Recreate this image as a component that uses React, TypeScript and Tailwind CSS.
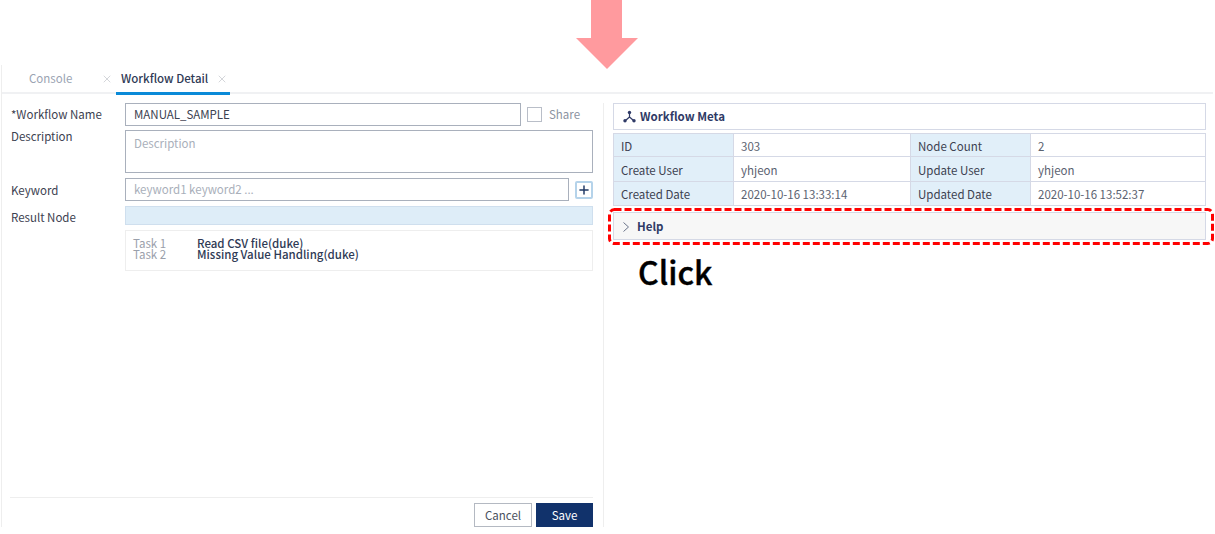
import { Plus, X } from "lucide-react";

const font = { fontFamily: '"Noto Sans CJK KR", "Noto Sans", sans-serif' };

const metaRows = [
  ["ID", "303", "Node Count", "2"],
  ["Create User", "yhjeon", "Update User", "yhjeon"],
  ["Created Date", "2020-10-16 13:33:14", "Updated Date", "2020-10-16 13:52:37"],
];

const App = () => {
  return (
    <div className="w-[1215px] h-[534px] overflow-hidden bg-white flex flex-col text-[11.5px] text-[#3c4150]" style={font}>
      {/* Pink arrow */}
      <div className="h-[65px] shrink-0 pl-[576px]">
        <svg width="62" height="69" viewBox="0 0 62 69" className="block">
          <polygon points="15,0 46,0 46,38 62,38 31,69 0,38 15,38" fill="#ff9a9e" />
        </svg>
      </div>

      <div className="flex-1 ml-[1px] border-l border-[#eeeeee] flex flex-col mb-[7px]">
        {/* Tabs */}
        <div className="h-[29px] shrink-0 flex items-stretch border-b-2 border-[#f0f1f3] mr-[2px]">
          <div className="w-[114px] flex items-center justify-between pl-[27px] pr-[3px] text-[#9aa3b2]">
            <span>Console</span>
            <X size={12} strokeWidth={1} className="text-[#a9adb5]" />
          </div>
          <div className="w-[114px] -mb-[3px] border-b-[3px] border-[#0a8ad8] flex items-center justify-between pl-[5px] pr-[2px] font-medium text-[#2f3a55]">
            <span>Workflow Detail</span>
            <X size={12} strokeWidth={1} className="text-[#a9adb5]" />
          </div>
        </div>

        {/* Body */}
        <div className="flex-1 flex pt-[9px]">
          {/* Left form */}
          <div className="w-[602px] shrink-0 border-r border-[#eeeeee] pl-[9px] pr-[10px] flex flex-col">
            <div className="flex items-center h-[23px]">
              <div className="w-[114px]">*Workflow Name</div>
              <div className="w-[396px] h-[23px] border border-[#a9b0bc] flex items-center px-[8px]">MANUAL_SAMPLE</div>
              <div className="ml-[6px] w-[15px] h-[15px] border border-[#b9bec8]"></div>
              <span className="ml-[7px] text-[#8b93a1]">Share</span>
            </div>
            <div className="flex h-[43px] mt-[4px]">
              <div className="w-[114px] leading-[12px]">Description</div>
              <div className="w-[468px] h-[43px] border border-[#a9b0bc] px-[8px] pt-[4px] text-[#a9afba]">Description</div>
            </div>
            <div className="flex items-center h-[23px] mt-[5px]">
              <div className="w-[114px] pt-[2px]">Keyword</div>
              <div className="w-[444px] h-[23px] border border-[#a9b0bc] flex items-center px-[8px] text-[#a9afba]">keyword1 keyword2 ...</div>
              <button className="ml-[6px] w-[18px] h-[18px] border-2 border-[#b5d3ea] rounded-[2px] flex items-center justify-center text-[#1f3864]">
                <Plus size={14} strokeWidth={2.5} />
              </button>
            </div>
            <div className="flex items-center h-[19px] mt-[5px]">
              <div className="w-[114px] pt-[5px]">Result Node</div>
              <div className="w-[468px] h-[19px] bg-[#deedf8] border border-[#cfdfee]"></div>
            </div>
            <div className="flex mt-[5px]">
              <div className="w-[114px]"></div>
              <div className="w-[468px] h-[41px] border border-[#eeeeee] pl-[7px] pt-[7px] leading-[11px]">
                <div className="flex">
                  <span className="w-[64px] text-[#9aa0ab]">Task 1</span>
                  <span className="font-medium text-[#2f3a55]">Read CSV file(duke)</span>
                </div>
                <div className="flex">
                  <span className="w-[64px] text-[#9aa0ab]">Task 2</span>
                  <span className="font-medium text-[#2f3a55]">Missing Value Handling(duke)</span>
                </div>
              </div>
            </div>

            {/* Footer */}
            <div className="mt-auto -ml-[1px] border-t border-[#eeeeee] pt-[5px] flex justify-end gap-[4px]">
              <button className="w-[58px] h-[24px] pt-[1px] border border-[#b4b9c2] text-[#4a5160] flex items-center justify-center">Cancel</button>
              <button className="w-[57px] h-[24px] pt-[1px] bg-[#11326b] text-white flex items-center justify-center">Save</button>
            </div>
          </div>

          {/* Right meta */}
          <div className="w-[593px] ml-[9px] shrink-0 flex flex-col">
            <div className="h-[27px] border border-[#d5d9e6] flex items-center pl-[9px] gap-[4px] font-bold text-[#2f3a66]">
              <svg width="13" height="13" viewBox="0 0 13 13" className="shrink-0">
                <path d="M6.5 3.5V7M6.5 7L2.5 10.5M6.5 7L10.5 10.5" stroke="#2f3a66" strokeWidth="1.2" fill="none" />
                <circle cx="6.5" cy="2.5" r="1.7" fill="#2f3a66" />
                <circle cx="2" cy="10.8" r="1.7" fill="#2f3a66" />
                <circle cx="11" cy="10.8" r="1.7" fill="#2f3a66" />
              </svg>
              <span>Workflow Meta</span>
            </div>

            <div className="mt-[3px] grid grid-cols-[120px_177px_120px_175px] grid-rows-[23px_25px_24px] border-l border-t border-[#d5d9e6]">
              {metaRows.flat().map((cell, i) => (
                <div
                  key={i}
                  className={
                    i % 2 === 0
                      ? "bg-[#e1eff9] border-r border-b border-[#d5d9e6] flex items-center pl-[7px] pt-[3px] text-[#3c4150]"
                      : "bg-white border-r border-b border-[#d5d9e6] flex items-center pl-[7px] pt-[3px] text-[#5b6270]"
                  }
                >
                  {cell}
                </div>
              ))}
            </div>

            {/* Help row with the red marker */}
            <div className="relative mt-[6px] h-[28px] pt-[1px] bg-[#f7f7f7] border border-[#d5d9e6] flex items-center pl-[8px] gap-[7px] font-bold text-[#2f3a66]">
              <svg width="8" height="10" viewBox="0 0 8 10" className="shrink-0">
                <polyline points="1.5,0.5 6.5,5 1.5,9.5" fill="none" stroke="#6a7389" strokeWidth="1" />
              </svg>
              <span>Help</span>
              <svg width="606" height="37" viewBox="0 0 606 37" className="absolute -left-[6px] -top-[5px] block">
                <rect x="1.5" y="1.5" width="603" height="34" rx="5" fill="none" stroke="#ff0000" strokeWidth="3" strokeDasharray="7 3" />
              </svg>
            </div>

            <div className="mt-[13px] pl-[25px] text-[32px] leading-[36px] font-medium text-black [-webkit-text-stroke:0.4px_black]">Click</div>
          </div>
        </div>
      </div>
    </div>
  );
};

export default App;
